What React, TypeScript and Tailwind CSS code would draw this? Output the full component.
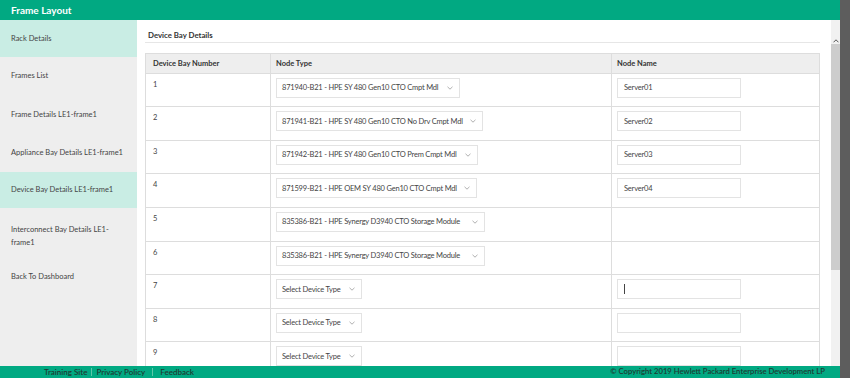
import React from "react";

const rows: { n: number; type: string; w: number; name: string | null; cursor?: boolean }[] = [
  { n: 1, type: "871940-B21 - HPE SY 480 Gen10 CTO Cmpt Mdl", w: 184, name: "Server01" },
  { n: 2, type: "871941-B21 - HPE SY 480 Gen10 CTO No Drv Cmpt Mdl", w: 207, name: "Server02" },
  { n: 3, type: "871942-B21 - HPE SY 480 Gen10 CTO Prem Cmpt Mdl", w: 202, name: "Server03" },
  { n: 4, type: "871599-B21 - HPE OEM SY 480 Gen10 CTO Cmpt Mdl", w: 201, name: "Server04" },
  { n: 5, type: "835386-B21 - HPE Synergy D3940 CTO Storage Module", w: 209, name: null },
  { n: 6, type: "835386-B21 - HPE Synergy D3940 CTO Storage Module", w: 209, name: null },
  { n: 7, type: "Select Device Type", w: 86, name: "", cursor: true },
  { n: 8, type: "Select Device Type", w: 86, name: "" },
  { n: 9, type: "Select Device Type", w: 86, name: "" },
];

const sideItems = [
  { label: "Rack Details", active: true, h: "h-[37px]" },
  { label: "Frames List", active: false, h: "h-[38px]" },
  { label: "Frame Details LE1-frame1", active: false, h: "h-[39px]" },
  { label: "Appliance Bay Details LE1-frame1", active: false, h: "h-[38px]" },
  { label: "Device Bay Details LE1-frame1", active: true, h: "h-[36px]" },
];

function Chevron() {
  return (
    <svg width="6" height="4" viewBox="0 0 6 4" className="ml-auto shrink-0">
      <path d="M0.5 0.8 L3 3.2 L5.5 0.8" fill="none" stroke="#9a9a9a" strokeWidth="0.8" />
    </svg>
  );
}

export default function App() {
  return (
    <div
      className="w-[850px] h-[378px] flex overflow-hidden bg-white text-[#333]"
      style={{ fontFamily: "Lato, 'Open Sans', sans-serif" }}
    >
      <div className="w-[840px] h-full flex flex-col">
        <div className="h-[20px] bg-[#01a982] flex items-center pl-[11px] text-white font-bold text-[10px]">
          Frame Layout
        </div>
        <div className="flex flex-1 min-h-0">
          <div className="w-[137px] bg-[#eeeeee] flex flex-col text-[7.5px] text-[#444]">
            {sideItems.map((it) => (
              <div
                key={it.label}
                className={`${it.h} flex items-center pl-[11px] whitespace-nowrap ${it.active ? "bg-[#c9ede4]" : ""}`}
              >
                {it.label}
              </div>
            ))}
            <div className="h-[55px] flex flex-col justify-center pl-[11px] pr-2 leading-[13px]">
              <span>Interconnect Bay Details LE1-</span>
              <span>frame1</span>
            </div>
            <div className="pl-[11px] pt-[8px]">Back To Dashboard</div>
          </div>
          <div className="flex-1 flex min-w-0 relative">
            <div className="flex-1 overflow-hidden pl-[8px] pr-[11px]">
              <div className="pl-[3px] pt-[10px] pb-0 text-[7.8px] font-bold border-b border-[#e6e6e6]">
                Device Bay Details
              </div>
              <div className="mt-[10px] w-[675px] border border-[#dddddd] text-[7.5px] tracking-[-0.2px]">
                <div className="grid grid-cols-[125px_341px_209px] h-[20px] bg-[#eeeeee] font-bold border-b border-[#dddddd] tracking-[0px]">
                  <div className="flex items-center pl-[7px] border-r border-[#dddddd]">Device Bay Number</div>
                  <div className="flex items-center pl-[5px] border-r border-[#dddddd]">Node Type</div>
                  <div className="flex items-center pl-[5px]">Node Name</div>
                </div>
                {rows.map((r) => (
                  <div
                    key={r.n}
                    className="grid grid-cols-[125px_341px_209px] h-[33.6px] border-b border-[#dddddd] text-[#444]"
                  >
                    <div className="pl-[7px] pt-[5px] border-r border-[#dddddd]">{r.n}</div>
                    <div className="pl-[5px] pt-[4px] border-r border-[#dddddd]">
                      <div
                        className="h-[20px] border border-[#e3e3e3] flex items-center pl-[5px] pr-[6px] gap-1"
                        style={{ width: r.w }}
                      >
                        <span className="whitespace-nowrap">{r.type}</span>
                        <Chevron />
                      </div>
                    </div>
                    <div className="pl-[5px] pt-[4px]">
                      {r.name !== null && (
                        <div className="w-[124px] h-[20px] border border-[#e3e3e3] flex items-center pl-[6px]">
                          {r.cursor ? <span className="w-px h-[10px] bg-[#444]" /> : r.name}
                        </div>
                      )}
                    </div>
                  </div>
                ))}
              </div>
            </div>
            <div className="w-[9px] bg-[#f1f1f1] flex flex-col items-center">
              <div className="h-[24px] flex items-end justify-center pb-[1px]">
                <svg width="6" height="4" viewBox="0 0 6 4">
                  <path d="M0.5 3.3 L3 0.8 L5.5 3.3" fill="none" stroke="#555" strokeWidth="1" />
                </svg>
              </div>
              <div className="w-[9px] h-[226px] bg-[#cdcdcd]" />
            </div>
          </div>
        </div>
        <div className="h-[12px] bg-[#01a982] flex items-center text-[8px] text-[#1f3b33] font-semibold">
          <span className="ml-[44px]">Training Site</span>
          <span className="ml-[4px] w-px h-[8px] bg-[#5ec8aa]" />
          <span className="ml-[4px]">Privacy Policy</span>
          <span className="ml-[7px] w-px h-[8px] bg-[#5ec8aa]" />
          <span className="ml-[7px]">Feedback</span>
          <span className="ml-auto mr-[15px] text-[7.7px]">© Copyright 2019 Hewlett Packard Enterprise Development LP</span>
        </div>
      </div>
      <div className="w-[10px] h-full bg-[#5d5d5d]" />
    </div>
  );
}
